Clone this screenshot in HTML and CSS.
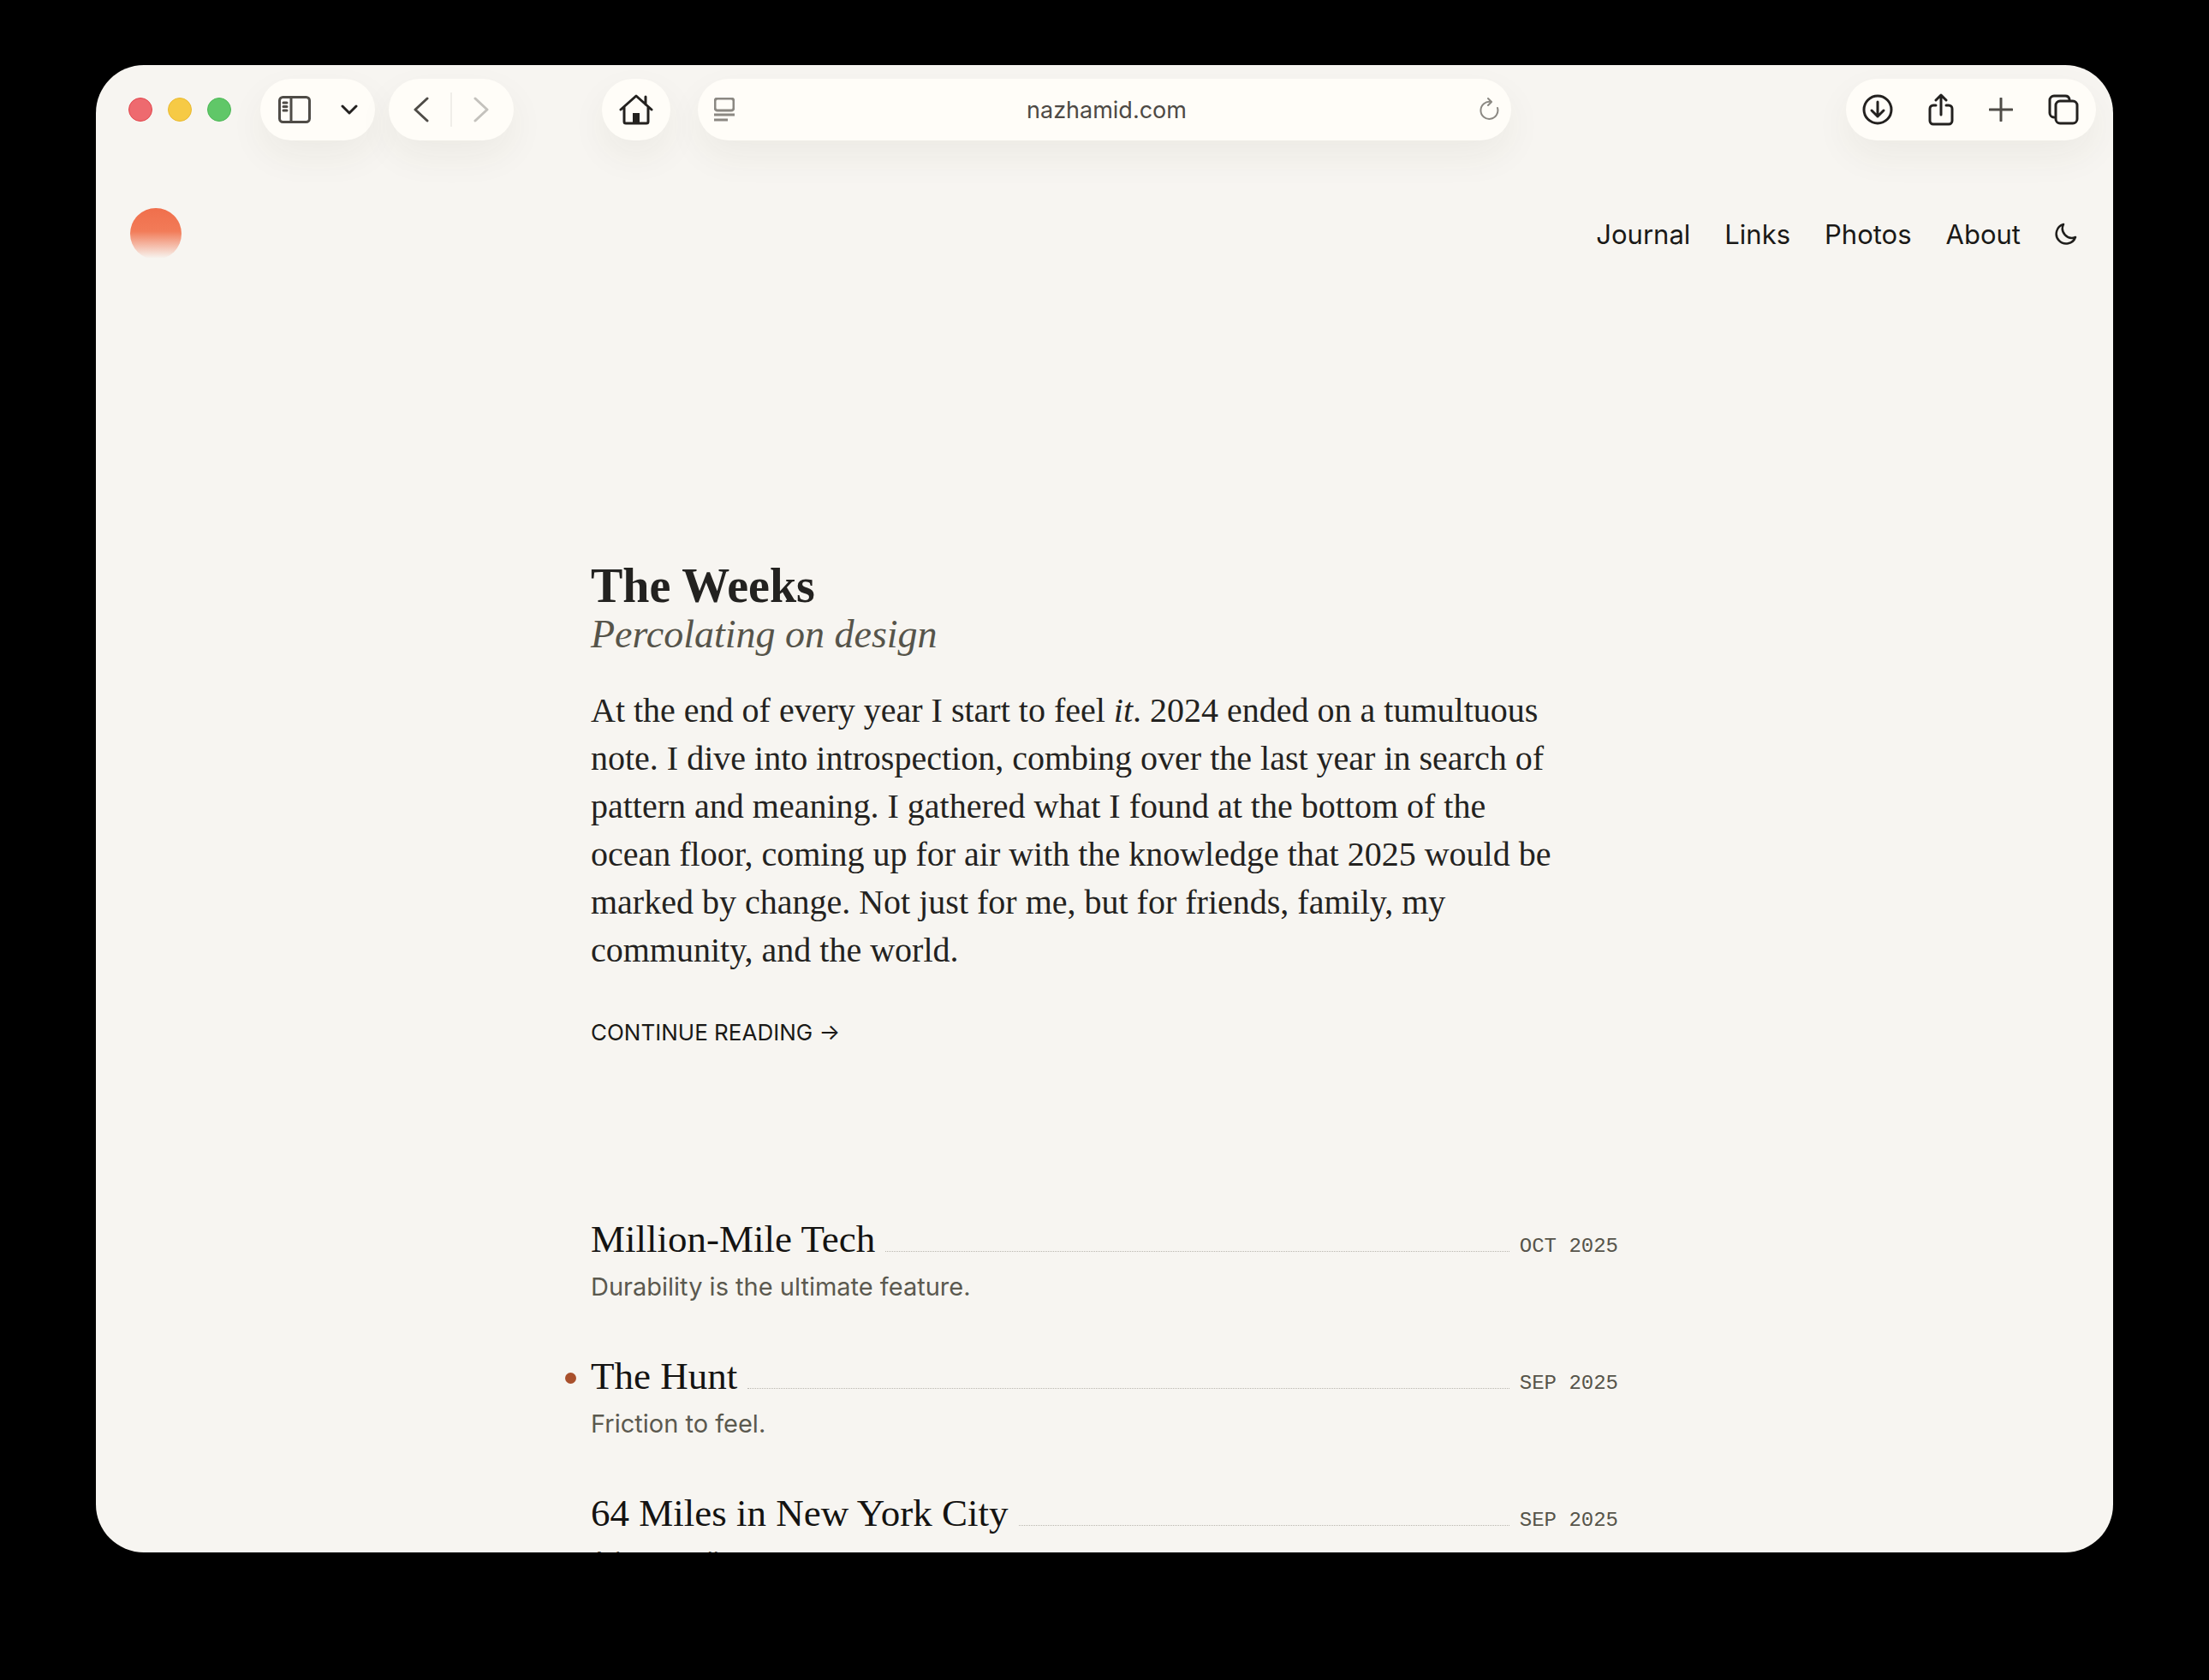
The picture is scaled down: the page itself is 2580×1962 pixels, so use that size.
FILE: index.html
```html
<!DOCTYPE html>
<html lang="en">
<head>
<meta charset="UTF-8">
<title>Naz Hamid</title>
<link rel="stylesheet" href="styles.css">
</head>
<body>
<div class="window">
    <!-- browser chrome -->
    <div class="toolbar">
        <div class="lights">
            <span class="light red"></span>
            <span class="light yellow"></span>
            <span class="light green"></span>
        </div>
        <div class="pill pill-sidebar">
            <svg class="ic" width="38" height="32" viewBox="0 0 38 32"><rect x="1.5" y="1.5" width="35" height="29" rx="4"/><path d="M15 1.5v29M6 8h4M6 12.5h4M6 17h4"/></svg>
            <svg class="ic ic-dark" width="20" height="12" viewBox="0 0 20 12"><path d="M2 2l8 8 8-8"/></svg>
        </div>
        <div class="pill pill-nav">
            <svg class="ic" width="18" height="30" viewBox="0 0 18 30"><path d="M16 2L2 15l14 13"/></svg>
            <span class="pill-sep"></span>
            <svg class="ic ic-off" width="18" height="30" viewBox="0 0 18 30"><path d="M2 2l14 13L2 28"/></svg>
        </div>
        <div class="pill pill-home">
            <svg class="ic ic-dark" width="40" height="36" viewBox="0 0 40 36"><path d="M2 18L20 2l18 16M6 15v17a2 2 0 0 0 2 2h24a2 2 0 0 0 2-2V15M31 3v9"/><path class="solid" d="M16 22h8v12h-8z"/></svg>
        </div>
        <div class="pill pill-url">
            <svg class="ic ic-soft" width="24" height="28" viewBox="0 0 24 28"><rect x="1" y="1" width="22" height="14" rx="3"/><path d="M0 20h24M0 26h16"/></svg>
            <span class="url">nazhamid.com</span>
            <svg class="ic ic-soft thin" width="24" height="28" viewBox="0 0 24 28"><path d="M14 5a10 10 0 1 0 8 7M11 1l4 4-4 4"/></svg>
        </div>
        <div class="pill pill-tools">
            <svg class="ic ic-dark" width="36" height="36" viewBox="0 0 36 36"><circle cx="18" cy="18" r="16"/><path d="M18 9v17M11 19l7 7 7-7"/></svg>
            <svg class="ic ic-dark" width="30" height="38" viewBox="0 0 30 38"><path d="M9 14H6a4 4 0 0 0-4 4v14a4 4 0 0 0 4 4h18a4 4 0 0 0 4-4V18a4 4 0 0 0-4-4h-3M15 25V2M9 8l6-6 6 6"/></svg>
            <svg class="ic ic-plus" width="28" height="28" viewBox="0 0 28 28"><path d="M14 1v26M1 14h26"/></svg>
            <svg class="ic ic-dark" width="36" height="36" viewBox="0 0 36 36"><path d="M7 27a5 5 0 0 1-5-5V7a5 5 0 0 1 5-5h13a5 5 0 0 1 5 4"/><rect x="9" y="8" width="25" height="26" rx="5"/></svg>
        </div>
    </div>

    <!-- site -->
    <div class="site-head">
        <span class="logo"></span>
        <nav class="nav">
            <a>Journal</a>
            <a>Links</a>
            <a>Photos</a>
            <a>About</a>
            <svg class="moon" width="26" height="26" viewBox="0 0 26 26"><path d="M10 2a11.500 11.500 0 1 0 14 15A11 11 0 0 1 10 2z"/></svg>
        </nav>
    </div>

    <main class="column">
        <article class="feature">
            <h1>The Weeks</h1>
            <h2>Percolating on design</h2>
            <p>At the end of every year I start to feel <em>it</em>. 2024 ended on a tumultuous<br>note. I dive into introspection, combing over the last year in search of<br>pattern and meaning. I gathered what I found at the bottom of the<br>ocean floor, coming up for air with the knowledge that 2025 would be<br>marked by change. Not just for me, but for friends, family, my<br>community, and the world.</p>
            <a class="more">CONTINUE READING →</a>
        </article>

        <ul class="posts">
            <li class="post">
                <div class="post-row">
                    <span class="post-title">Million-Mile Tech</span>
                    <span class="leader"></span>
                    <span class="post-date">OCT 2025</span>
                </div>
                <div class="post-sub">Durability is the ultimate feature.</div>
            </li>
            <li class="post is-new">
                <div class="post-row">
                    <span class="post-title">The Hunt</span>
                    <span class="leader"></span>
                    <span class="post-date">SEP 2025</span>
                </div>
                <div class="post-sub">Friction to feel.</div>
            </li>
            <li class="post">
                <div class="post-row">
                    <span class="post-title">64 Miles in New York City</span>
                    <span class="leader"></span>
                    <span class="post-date">SEP 2025</span>
                </div>
                <div class="post-sub">A long walk.</div>
            </li>
        </ul>
    </main>
</div>
</body>
</html>
```

FILE: styles.css
```css
* { box-sizing: border-box; }
html, body { margin: 0; background: #000; }
body { padding: 76px 112px 149px; }

.window {
    height: 1737px; overflow: hidden;
    background: #f7f5f1; border-radius: 56px;
    font-family: "Liberation Serif", serif; color: #1f1e1c;
}

/* toolbar */
.toolbar { display: flex; align-items: center; padding: 16px 20px 0 38px; }
.lights { display: flex; gap: 18px; margin-right: 34px; }
.light { width: 28px; height: 28px; border-radius: 50%; }
.red { background: #ee6a6f; border: 1px solid #e2474e; }
.yellow { background: #f6ca45; border: 1px solid #eab92f; }
.green { background: #60c768; border: 1px solid #4db857; }

.pill {
    display: flex; align-items: center; height: 72px;
    background: #fffdf8; border-radius: 36px;
    box-shadow: 0 18px 44px rgba(70, 60, 40, .06);
}
.pill-sidebar { width: 134px; padding: 0 20px 0 21px; justify-content: space-between; margin-right: 16px; }
.pill-nav { width: 146px; padding: 0 29px; justify-content: space-between; margin-right: 103px; }
.pill-sep { width: 2px; height: 40px; background: #f0eee9; }
.pill-home { width: 80px; justify-content: center; margin-right: 32px; }
.pill-url { width: 950px; padding: 0 14px 0 19px; justify-content: space-between; margin-right: 391px; }
.pill-tools { width: 292px; padding: 0 20px 0 19px; justify-content: space-between; }
.url { font: 400 27px "Inter", sans-serif; color: #4d4a45; }

.ic { fill: none; stroke: #4f4c47; stroke-width: 3; stroke-linecap: round; stroke-linejoin: round; }
.ic-dark { stroke: #23211f; }
.ic-off { stroke: #c4c2bd; }
.ic-soft { stroke: #8b8882; stroke-linecap: butt; }
.ic-plus { stroke: #4f4c47; }
.thin { stroke-width: 2; stroke-linecap: round; }
.solid { fill: #23211f; stroke: none; }

/* site header */
.site-head { display: flex; align-items: center; justify-content: space-between; padding: 79px 42px 0 40px; }
.logo {
    width: 60px; height: 60px; border-radius: 50%;
    background: linear-gradient(#f06f4c 0%, #f27b58 45%, #f7f5f1 98%);
}
.nav { display: flex; align-items: center; gap: 40px; font: 400 31px "Inter", sans-serif; color: #1a1917; }
.moon { fill: none; stroke: #1f1e1c; stroke-width: 2.500; stroke-linejoin: round; }

/* column */
.column { width: 1200px; margin: 0 auto; padding-top: 350px; }
.feature h1 { margin: 0; font-size: 56px; line-height: 62px; font-weight: 700; color: #232220; }
.feature h2 { margin: 0; font-size: 46px; line-height: 52px; font-weight: 400; font-style: italic; color: #56544a; }
.feature p { margin: 35px 0 0; font-size: 40px; line-height: 56px; color: #232220; }
.more { display: block; margin-top: 52px; font: 400 26px "Inter", sans-serif; color: #1a1917; }

.posts { list-style: none; margin: 198px 0 0; padding: 0; }
.post { height: 160px; position: relative; }
.post-row { display: flex; align-items: baseline; }
.post-title { font-size: 45px; line-height: 56px; color: #141311; }
.leader { flex: 1; margin: 0 12px; border-bottom: 1px dotted #b9b6ae; }
.post-date { font: 400 24px "Liberation Mono", monospace; color: #56544a; }
.post-sub { margin-top: 10px; font: 400 29px "Inter", sans-serif; color: #5b594f; }
.is-new::before {
    content: ""; position: absolute; left: -30px; top: 24px;
    width: 13px; height: 13px; border-radius: 50%; background: #a9502c;
}
```
